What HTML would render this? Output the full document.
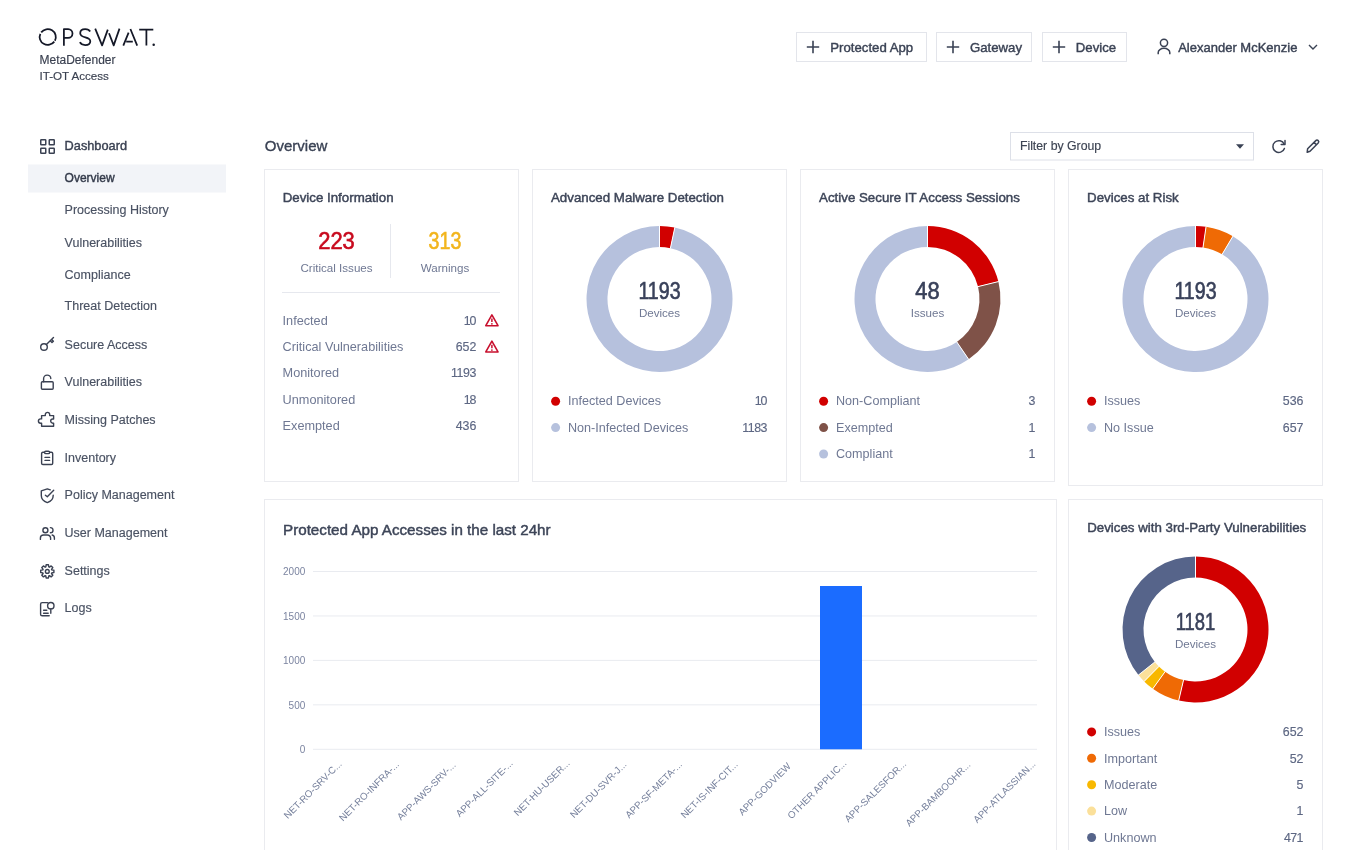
<!DOCTYPE html>
<html><head><meta charset="utf-8"><title>MetaDefender IT-OT Access - Overview</title>
<style>html,body{margin:0;padding:0;background:#fff;width:1360px;height:850px;overflow:hidden}svg{display:block;will-change:transform}text{font-family:"Liberation Sans",sans-serif}</style>
</head><body>
<svg width="1360" height="850" viewBox="0 0 1360 850">
<rect width="1360" height="850" fill="#fff"/>
<g fill="none" stroke="#141827" stroke-width="1.75" stroke-linejoin="round">
<path d="M41.20,32.36 A8.1,7.9 0 0 1 54.90,40.71"/>
<path d="M54.30,41.64 A8.1,7.9 0 0 1 40.35,33.79"/>
<path d="M63.9,45.8 V29.1 H68.1 A4.4,4.4 0 0 1 68.1,37.9 H63.9"/>
<path d="M90.2,31.5 C89.2,29.6 87.3,29.0 85.2,29.0 C82.1,29.0 80.2,30.7 80.2,33.2 C80.2,38.6 90.3,36.2 90.3,41.2 C90.3,43.9 88.2,45.0 85.2,45.0 C82.8,45.0 80.8,44.1 79.9,42.2"/>
<path d="M95.2,28.6 L102.1,45.4 L107.8,29.6 M109.0,33.2 L113.7,45.4 L119.5,28.6"/>
<path d="M123.3,45.6 L128.6,32.6 M130.4,29.0 L137.2,45.6 M126.2,41.6 H132.8"/>
<path d="M139.2,29.7 H153.3 M146.4,30 V45.6"/>
</g>
<circle cx="153.7" cy="44.7" r="1.25" fill="#141827"/>
<text x="39.5" y="64.3" font-size="12" fill="#3a4050" text-anchor="start" stroke="#3a4050" stroke-width="0.15" >MetaDefender</text>
<text x="39.5" y="80.2" font-size="11.6" fill="#3a4050" text-anchor="start" stroke="#3a4050" stroke-width="0.15" >IT-OT Access</text>
<rect x="796.5" y="32.5" width="130" height="29" fill="#fff" stroke="#e3e5eb" stroke-width="1"/>
<path d="M806.8,47 H819.2 M813,40.8 V53.2" stroke="#3a4254" stroke-width="1.6" fill="none"/>
<text x="830.3" y="51.7" font-size="13.2" fill="#3a4254" text-anchor="start" stroke="#3a4254" stroke-width="0.4" >Protected App</text>
<rect x="936.5" y="32.5" width="95" height="29" fill="#fff" stroke="#e3e5eb" stroke-width="1"/>
<path d="M946.8,47 H959.2 M953,40.8 V53.2" stroke="#3a4254" stroke-width="1.6" fill="none"/>
<text x="970" y="51.7" font-size="13.2" fill="#3a4254" text-anchor="start" stroke="#3a4254" stroke-width="0.4" >Gateway</text>
<rect x="1042.5" y="32.5" width="84" height="29" fill="#fff" stroke="#e3e5eb" stroke-width="1"/>
<path d="M1052.8,47 H1065.2 M1059,40.8 V53.2" stroke="#3a4254" stroke-width="1.6" fill="none"/>
<text x="1075.8" y="51.7" font-size="13.2" fill="#3a4254" text-anchor="start" stroke="#3a4254" stroke-width="0.4" >Device</text>
<g fill="none" stroke="#3a4254" stroke-width="1.5"><circle cx="1164" cy="42.8" r="3.6"/><path d="M1158.2,54.2 V52.5 A5.8,4.2 0 0 1 1169.8,52.5 V54.2"/></g>
<text x="1178.2" y="51.8" font-size="13" fill="#3a4254" text-anchor="start" stroke="#3a4254" stroke-width="0.4" >Alexander McKenzie</text>
<path d="M1309,45 L1313,49 L1317,45" stroke="#3a4254" stroke-width="1.4" fill="none"/>
<rect x="28" y="164.5" width="198" height="28" fill="#f2f4f8"/>
<g fill="none" stroke="#3a4152" stroke-width="1.5">
<rect x="40.75" y="139.75" width="5" height="5" rx="0.6"/>
<rect x="49.25" y="139.75" width="5" height="5" rx="0.6"/>
<rect x="40.75" y="148.25" width="5" height="5" rx="0.6"/>
<rect x="49.25" y="148.25" width="5" height="5" rx="0.6"/>
</g>
<text x="64.6" y="149.9" font-size="12.75" fill="#3a4152" text-anchor="start" stroke="#3a4152" stroke-width="0.4" >Dashboard</text>
<text x="64.6" y="181.6" font-size="12" fill="#333a4a" text-anchor="start" stroke="#333a4a" stroke-width="0.4" >Overview</text>
<text x="64.6" y="214.4" font-size="12.5" fill="#4a5263" text-anchor="start" stroke="#4a5263" stroke-width="0.15" >Processing History</text>
<text x="64.6" y="246.5" font-size="12.5" fill="#4a5263" text-anchor="start" stroke="#4a5263" stroke-width="0.15" >Vulnerabilities</text>
<text x="64.6" y="278.5" font-size="12.5" fill="#4a5263" text-anchor="start" stroke="#4a5263" stroke-width="0.15" >Compliance</text>
<text x="64.6" y="310.4" font-size="12.5" fill="#4a5263" text-anchor="start" stroke="#4a5263" stroke-width="0.15" >Threat Detection</text>
<text x="64.6" y="348.5" font-size="12.5" fill="#4a5263" text-anchor="start" stroke="#4a5263" stroke-width="0.15" >Secure Access</text>
<text x="64.6" y="386.3" font-size="12.5" fill="#4a5263" text-anchor="start" stroke="#4a5263" stroke-width="0.15" >Vulnerabilities</text>
<text x="64.6" y="423.9" font-size="12.5" fill="#4a5263" text-anchor="start" stroke="#4a5263" stroke-width="0.15" >Missing Patches</text>
<text x="64.6" y="461.8" font-size="12.5" fill="#4a5263" text-anchor="start" stroke="#4a5263" stroke-width="0.15" >Inventory</text>
<text x="64.6" y="499.1" font-size="12.5" fill="#4a5263" text-anchor="start" stroke="#4a5263" stroke-width="0.15" >Policy Management</text>
<text x="64.6" y="537.2" font-size="12.5" fill="#4a5263" text-anchor="start" stroke="#4a5263" stroke-width="0.15" >User Management</text>
<text x="64.6" y="574.7" font-size="12.5" fill="#4a5263" text-anchor="start" stroke="#4a5263" stroke-width="0.15" >Settings</text>
<text x="64.6" y="612.3" font-size="12.5" fill="#4a5263" text-anchor="start" stroke="#4a5263" stroke-width="0.15" >Logs</text>
<g fill="none" stroke="#3a4152" stroke-width="1.4" stroke-linecap="round" stroke-linejoin="round">
<circle cx="44" cy="347" r="3.3"/><path d="M46.4,344.6 L53.5,337.5 M50.2,340.8 L52.0,342.6 L53.4,341.2 L51.6,339.4"/>
<rect x="41.4" y="381.8" width="11.8" height="7.5" rx="1"/><path d="M43.6,381.8 V378.8 A3.6,3.6 0 0 1 50.8,378.6"/>
<path d="M41.6,426.3 V423.3 H40.6 A2.2,2.2 0 0 1 40.6,418.9 H41.6 V415.6 H45.3 V414.6 A2.2,2.2 0 0 1 49.7,414.6 V415.6 H53.6 V419 H52.8 A2.1,2.1 0 0 0 52.8,423.2 H53.6 V426.3 Z"/>
<rect x="41.6" y="452.3" width="11.1" height="12.2" rx="1.3"/><rect x="44.6" y="451.2" width="5" height="2.4" rx="1.2" fill="#fff"/><path d="M45,457.4 H49.6 M45,460.4 H49.6"/>
<path d="M50.3,489.9 L47.3,488.9 L41.3,490.8 V495.5 C41.3,499 44,501.5 47.3,502.6 C50.6,501.5 53.2,499 53.2,495.5 V495.2 M45.4,495.3 L47.3,496.8 L53.7,490.3"/>
<circle cx="45.4" cy="530.2" r="2.5"/><path d="M50.4,527.6 A2.6,2.6 0 0 1 50.4,532.8 M40.4,539.4 V538 A3.2,3 0 0 1 43.6,535 H47.4 A3.2,3 0 0 1 50.6,538 V539.4 M52.2,535 A2.5,3 0 0 1 54.4,538 V539.2"/>
<path d="M45.81,566.94 L46.14,564.80 L48.46,564.80 L48.79,566.94 L49.40,567.19 L51.14,565.91 L52.79,567.56 L51.51,569.30 L51.76,569.91 L53.90,570.24 L53.90,572.56 L51.76,572.89 L51.51,573.50 L52.79,575.24 L51.14,576.89 L49.40,575.61 L48.79,575.86 L48.46,578.00 L46.14,578.00 L45.81,575.86 L45.20,575.61 L43.46,576.89 L41.81,575.24 L43.09,573.50 L42.84,572.89 L40.70,572.56 L40.70,570.24 L42.84,569.91 L43.09,569.30 L41.81,567.56 L43.46,565.91 L45.20,567.19 Z"/><circle cx="47.3" cy="571.4" r="1.9"/>
<path d="M47.5,602.6 H42.2 A1.6,1.6 0 0 0 40.6,604.2 V614.2 A1.6,1.6 0 0 0 42.2,615.8 H49.2 M43.6,610.3 H46.8 M43.6,613.2 H48.2"/><circle cx="50.8" cy="605.7" r="3.2"/><path d="M50.8,609 V613.3"/>
</g>
<text x="264.8" y="150.9" font-size="15" fill="#3a4254" text-anchor="start" stroke="#3a4254" stroke-width="0.35" >Overview</text>
<rect x="1010.5" y="132.5" width="243" height="27.5" fill="#fff" stroke="#dde0e8" stroke-width="1"/>
<text x="1019.9" y="149.6" font-size="12.3" fill="#3d4453" text-anchor="start" stroke="#3d4453" stroke-width="0.15" >Filter by Group</text>
<path d="M1236,144.2 L1244,144.2 L1240,148.8 Z" fill="#3a4254"/>
<g fill="none" stroke="#3a4254" stroke-width="1.5" stroke-linecap="round" stroke-linejoin="round">
<path d="M1284.2,144.2 A5.9,5.9 0 1 0 1284.4,148.4"/><path d="M1285,140.6 V144.4 H1281.2"/>
<path d="M1307.2,152.2 L1307.6,148.8 L1315.8,140.6 A1.6,1.6 0 0 1 1318.2,143 L1310,151.2 Z M1314,142.4 L1316.4,144.8"/>
</g>
<rect x="264.5" y="169.5" width="254" height="312" fill="#fff" stroke="#eaebef" stroke-width="1"/>
<rect x="532.5" y="169.5" width="254" height="312" fill="#fff" stroke="#eaebef" stroke-width="1"/>
<rect x="800.5" y="169.5" width="254" height="312" fill="#fff" stroke="#eaebef" stroke-width="1"/>
<rect x="1068.5" y="169.5" width="254" height="316" fill="#fff" stroke="#eaebef" stroke-width="1"/>
<rect x="264.5" y="499.5" width="792" height="361" fill="#fff" stroke="#eaebef" stroke-width="1"/>
<rect x="1068.5" y="499.5" width="254" height="361" fill="#fff" stroke="#eaebef" stroke-width="1"/>
<text x="282.7" y="201.8" font-size="13.3" fill="#3d4558" text-anchor="start" stroke="#3d4558" stroke-width="0.45" >Device Information</text>
<text x="336.5" y="249.4" font-size="23" fill="#c80a1e" text-anchor="middle" stroke="#c80a1e" stroke-width="0.6" textLength="36.6" lengthAdjust="spacingAndGlyphs">223</text>
<text x="336.5" y="271.8" font-size="11.6" fill="#6f7893" text-anchor="middle" >Critical Issues</text>
<text x="445" y="249.4" font-size="23" fill="#f2b51d" text-anchor="middle" stroke="#f2b51d" stroke-width="0.6" textLength="32.8" lengthAdjust="spacingAndGlyphs">313</text>
<text x="445" y="271.8" font-size="11.6" fill="#6f7893" text-anchor="middle" >Warnings</text>
<line x1="390.5" y1="224" x2="390.5" y2="278" stroke="#e6e8ee" stroke-width="1"/>
<line x1="282" y1="292.5" x2="500" y2="292.5" stroke="#e6e8ee" stroke-width="1"/>
<text x="282.6" y="324.9" font-size="12.7" fill="#6f7893" text-anchor="start" >Infected</text>
<text x="476.4" y="324.9" font-size="12.4" fill="#5d6783" text-anchor="end" stroke="#5d6783" stroke-width="0.15" textLength="12.69" lengthAdjust="spacing">10</text>
<path d="M491.9,314.9 L498,325.7 H485.8 Z" fill="none" stroke="#c8102e" stroke-width="1.6" stroke-linejoin="round"/>
<path d="M491.9,318.5 V321.9" stroke="#c8102e" stroke-width="1.5"/><circle cx="491.9" cy="323.8" r="0.85" fill="#c8102e"/>
<text x="282.6" y="351.15" font-size="12.7" fill="#6f7893" text-anchor="start" >Critical Vulnerabilities</text>
<text x="476.4" y="351.15" font-size="12.4" fill="#5d6783" text-anchor="end" stroke="#5d6783" stroke-width="0.15" textLength="20.68" lengthAdjust="spacing">652</text>
<path d="M491.9,341.15 L498,351.95 H485.8 Z" fill="none" stroke="#c8102e" stroke-width="1.6" stroke-linejoin="round"/>
<path d="M491.9,344.75 V348.15" stroke="#c8102e" stroke-width="1.5"/><circle cx="491.9" cy="350.05" r="0.85" fill="#c8102e"/>
<text x="282.6" y="377.4" font-size="12.7" fill="#6f7893" text-anchor="start" >Monitored</text>
<text x="476.4" y="377.4" font-size="12.4" fill="#5d6783" text-anchor="end" stroke="#5d6783" stroke-width="0.15" textLength="25.37" lengthAdjust="spacing">1193</text>
<text x="282.6" y="403.65" font-size="12.7" fill="#6f7893" text-anchor="start" >Unmonitored</text>
<text x="476.4" y="403.65" font-size="12.4" fill="#5d6783" text-anchor="end" stroke="#5d6783" stroke-width="0.15" textLength="12.69" lengthAdjust="spacing">18</text>
<text x="282.6" y="429.9" font-size="12.7" fill="#6f7893" text-anchor="start" >Exempted</text>
<text x="476.4" y="429.9" font-size="12.4" fill="#5d6783" text-anchor="end" stroke="#5d6783" stroke-width="0.15" textLength="20.68" lengthAdjust="spacing">436</text>
<text x="551" y="201.8" font-size="13.3" fill="#3d4558" text-anchor="start" stroke="#3d4558" stroke-width="0.45" >Advanced Malware Detection</text>
<path d="M659.50,226.00 A73,73 0 0 1 674.80,227.62 L670.40,248.16 A52,52 0 0 0 659.50,247.00 Z" fill="#d10000"/>
<path d="M674.80,227.62 A73,73 0 1 1 659.50,226.00 L659.50,247.00 A52,52 0 1 0 670.40,248.16 Z" fill="#b6c1dd"/>
<line x1="659.50" y1="247.50" x2="659.50" y2="225.50" stroke="#fff" stroke-width="1"/>
<line x1="670.30" y1="248.64" x2="674.91" y2="227.13" stroke="#fff" stroke-width="1"/>
<text x="659.5" y="299.4" font-size="23" fill="#39415a" text-anchor="middle" stroke="#39415a" stroke-width="0.6" textLength="42.2" lengthAdjust="spacingAndGlyphs">1193</text>
<text x="659.5" y="317.2" font-size="11.6" fill="#6f7893" text-anchor="middle" >Devices</text>
<circle cx="555.6" cy="401.2" r="4.5" fill="#d10000"/>
<text x="568" y="405.4" font-size="12.6" fill="#6f7893" text-anchor="start" >Infected Devices</text>
<text x="767.5" y="405.4" font-size="12.4" fill="#5d6783" text-anchor="end" stroke="#5d6783" stroke-width="0.15" textLength="12.69" lengthAdjust="spacing">10</text>
<circle cx="555.6" cy="427.59999999999997" r="4.5" fill="#b6c1dd"/>
<text x="568" y="431.79999999999995" font-size="12.6" fill="#6f7893" text-anchor="start" >Non-Infected Devices</text>
<text x="767.5" y="431.79999999999995" font-size="12.4" fill="#5d6783" text-anchor="end" stroke="#5d6783" stroke-width="0.15" textLength="25.37" lengthAdjust="spacing">1183</text>
<text x="819.1" y="201.8" font-size="13.3" fill="#3d4558" text-anchor="start" stroke="#3d4558" stroke-width="0.45" >Active Secure IT Access Sessions</text>
<path d="M927.50,226.00 A73,73 0 0 1 998.39,281.59 L978.00,286.60 A52,52 0 0 0 927.50,247.00 Z" fill="#d10000"/>
<path d="M998.39,281.59 A73,73 0 0 1 968.64,359.31 L956.80,341.96 A52,52 0 0 0 978.00,286.60 Z" fill="#7f5248"/>
<path d="M968.64,359.31 A73,73 0 1 1 927.50,226.00 L927.50,247.00 A52,52 0 1 0 956.80,341.96 Z" fill="#b6c1dd"/>
<line x1="927.50" y1="247.50" x2="927.50" y2="225.50" stroke="#fff" stroke-width="1"/>
<line x1="977.51" y1="286.72" x2="998.88" y2="281.47" stroke="#fff" stroke-width="1"/>
<line x1="956.52" y1="341.54" x2="968.92" y2="359.72" stroke="#fff" stroke-width="1"/>
<text x="927.5" y="299.4" font-size="23" fill="#39415a" text-anchor="middle" stroke="#39415a" stroke-width="0.6" textLength="24.4" lengthAdjust="spacingAndGlyphs">48</text>
<text x="927.5" y="317.2" font-size="11.6" fill="#6f7893" text-anchor="middle" >Issues</text>
<circle cx="823.6" cy="401.2" r="4.5" fill="#d10000"/>
<text x="836" y="405.4" font-size="12.6" fill="#6f7893" text-anchor="start" >Non-Compliant</text>
<text x="1035.5" y="405.4" font-size="12.4" fill="#5d6783" text-anchor="end" stroke="#5d6783" stroke-width="0.15" textLength="6.89" lengthAdjust="spacing">3</text>
<circle cx="823.6" cy="427.59999999999997" r="4.5" fill="#7f5248"/>
<text x="836" y="431.79999999999995" font-size="12.6" fill="#6f7893" text-anchor="start" >Exempted</text>
<text x="1035.5" y="431.79999999999995" font-size="12.4" fill="#5d6783" text-anchor="end" stroke="#5d6783" stroke-width="0.15" textLength="5.79" lengthAdjust="spacing">1</text>
<circle cx="823.6" cy="454.0" r="4.5" fill="#b6c1dd"/>
<text x="836" y="458.2" font-size="12.6" fill="#6f7893" text-anchor="start" >Compliant</text>
<text x="1035.5" y="458.2" font-size="12.4" fill="#5d6783" text-anchor="end" stroke="#5d6783" stroke-width="0.15" textLength="5.79" lengthAdjust="spacing">1</text>
<text x="1087.1" y="201.8" font-size="13.3" fill="#3d4558" text-anchor="start" stroke="#3d4558" stroke-width="0.45" >Devices at Risk</text>
<path d="M1195.50,226.00 A73,73 0 0 1 1206.04,226.76 L1203.01,247.54 A52,52 0 0 0 1195.50,247.00 Z" fill="#d10000"/>
<path d="M1206.04,226.76 A73,73 0 0 1 1232.88,236.30 L1222.13,254.33 A52,52 0 0 0 1203.01,247.54 Z" fill="#ef6a05"/>
<path d="M1232.88,236.30 A73,73 0 1 1 1195.50,226.00 L1195.50,247.00 A52,52 0 1 0 1222.13,254.33 Z" fill="#b6c1dd"/>
<line x1="1195.50" y1="247.50" x2="1195.50" y2="225.50" stroke="#fff" stroke-width="1"/>
<line x1="1202.93" y1="248.04" x2="1206.11" y2="226.27" stroke="#fff" stroke-width="1"/>
<line x1="1221.87" y1="254.76" x2="1233.14" y2="235.87" stroke="#fff" stroke-width="1"/>
<text x="1195.5" y="299.4" font-size="23" fill="#39415a" text-anchor="middle" stroke="#39415a" stroke-width="0.6" textLength="42.2" lengthAdjust="spacingAndGlyphs">1193</text>
<text x="1195.5" y="317.2" font-size="11.6" fill="#6f7893" text-anchor="middle" >Devices</text>
<circle cx="1091.6" cy="401.2" r="4.5" fill="#d10000"/>
<text x="1104" y="405.4" font-size="12.6" fill="#6f7893" text-anchor="start" >Issues</text>
<text x="1303.5" y="405.4" font-size="12.4" fill="#5d6783" text-anchor="end" stroke="#5d6783" stroke-width="0.15" textLength="20.68" lengthAdjust="spacing">536</text>
<circle cx="1091.6" cy="427.59999999999997" r="4.5" fill="#b6c1dd"/>
<text x="1104" y="431.79999999999995" font-size="12.6" fill="#6f7893" text-anchor="start" >No Issue</text>
<text x="1303.5" y="431.79999999999995" font-size="12.4" fill="#5d6783" text-anchor="end" stroke="#5d6783" stroke-width="0.15" textLength="20.68" lengthAdjust="spacing">657</text>
<text x="1087.2" y="531.8" font-size="13.3" fill="#3d4558" text-anchor="start" stroke="#3d4558" stroke-width="0.45" >Devices with 3rd-Party Vulnerabilities</text>
<path d="M1195.50,556.50 A73,73 0 1 1 1178.71,700.54 L1183.54,680.11 A52,52 0 1 0 1195.50,577.50 Z" fill="#d10000"/>
<path d="M1178.71,700.54 A73,73 0 0 1 1152.80,688.71 L1165.08,671.68 A52,52 0 0 0 1183.54,680.11 Z" fill="#ef6a05"/>
<path d="M1152.80,688.71 A73,73 0 0 1 1144.15,681.39 L1158.92,666.46 A52,52 0 0 0 1165.08,671.68 Z" fill="#f8b800"/>
<path d="M1144.15,681.39 A73,73 0 0 1 1138.45,675.04 L1154.86,661.94 A52,52 0 0 0 1158.92,666.46 Z" fill="#fbe09a"/>
<path d="M1138.45,675.04 A73,73 0 0 1 1195.50,556.50 L1195.50,577.50 A52,52 0 0 0 1154.86,661.94 Z" fill="#56648a"/>
<line x1="1195.50" y1="578.00" x2="1195.50" y2="556.00" stroke="#fff" stroke-width="1"/>
<line x1="1183.65" y1="679.62" x2="1178.59" y2="701.03" stroke="#fff" stroke-width="1"/>
<line x1="1165.37" y1="671.27" x2="1152.51" y2="689.11" stroke="#fff" stroke-width="1"/>
<line x1="1159.28" y1="666.11" x2="1143.80" y2="681.74" stroke="#fff" stroke-width="1"/>
<line x1="1155.25" y1="661.63" x2="1138.06" y2="675.36" stroke="#fff" stroke-width="1"/>
<text x="1195.5" y="629.8" font-size="23" fill="#39415a" text-anchor="middle" stroke="#39415a" stroke-width="0.6" textLength="39.6" lengthAdjust="spacingAndGlyphs">1181</text>
<text x="1195.5" y="647.5" font-size="11.6" fill="#6f7893" text-anchor="middle" >Devices</text>
<circle cx="1091.6" cy="731.9" r="4.5" fill="#d10000"/>
<text x="1104" y="736.1" font-size="12.6" fill="#6f7893" text-anchor="start" >Issues</text>
<text x="1303.5" y="736.1" font-size="12.4" fill="#5d6783" text-anchor="end" stroke="#5d6783" stroke-width="0.15" textLength="20.68" lengthAdjust="spacing">652</text>
<circle cx="1091.6" cy="758.3" r="4.5" fill="#ef6a05"/>
<text x="1104" y="762.5" font-size="12.6" fill="#6f7893" text-anchor="start" >Important</text>
<text x="1303.5" y="762.5" font-size="12.4" fill="#5d6783" text-anchor="end" stroke="#5d6783" stroke-width="0.15" textLength="13.79" lengthAdjust="spacing">52</text>
<circle cx="1091.6" cy="784.6999999999999" r="4.5" fill="#f8b800"/>
<text x="1104" y="788.9" font-size="12.6" fill="#6f7893" text-anchor="start" >Moderate</text>
<text x="1303.5" y="788.9" font-size="12.4" fill="#5d6783" text-anchor="end" stroke="#5d6783" stroke-width="0.15" textLength="6.89" lengthAdjust="spacing">5</text>
<circle cx="1091.6" cy="811.0999999999999" r="4.5" fill="#fbe09a"/>
<text x="1104" y="815.3" font-size="12.6" fill="#6f7893" text-anchor="start" >Low</text>
<text x="1303.5" y="815.3" font-size="12.4" fill="#5d6783" text-anchor="end" stroke="#5d6783" stroke-width="0.15" textLength="5.79" lengthAdjust="spacing">1</text>
<circle cx="1091.6" cy="837.5" r="4.5" fill="#56648a"/>
<text x="1104" y="841.7" font-size="12.6" fill="#6f7893" text-anchor="start" >Unknown</text>
<text x="1303.5" y="841.7" font-size="12.4" fill="#5d6783" text-anchor="end" stroke="#5d6783" stroke-width="0.15" textLength="19.58" lengthAdjust="spacing">471</text>
<text x="283" y="534.7" font-size="15.2" fill="#3d4558" text-anchor="start" stroke="#3d4558" stroke-width="0.45" >Protected App Accesses in the last 24hr</text>
<line x1="313" y1="571.50" x2="1037" y2="571.50" stroke="#e9ebf0" stroke-width="1"/>
<text x="305.3" y="575.2" font-size="10" fill="#7b84a0" text-anchor="end" >2000</text>
<line x1="313" y1="615.95" x2="1037" y2="615.95" stroke="#e9ebf0" stroke-width="1"/>
<text x="305.3" y="619.6500000000001" font-size="10" fill="#7b84a0" text-anchor="end" >1500</text>
<line x1="313" y1="660.40" x2="1037" y2="660.40" stroke="#e9ebf0" stroke-width="1"/>
<text x="305.3" y="664.1" font-size="10" fill="#7b84a0" text-anchor="end" >1000</text>
<line x1="313" y1="704.85" x2="1037" y2="704.85" stroke="#e9ebf0" stroke-width="1"/>
<text x="305.3" y="708.5500000000001" font-size="10" fill="#7b84a0" text-anchor="end" >500</text>
<line x1="313" y1="749.30" x2="1037" y2="749.30" stroke="#e9ebf0" stroke-width="1"/>
<text x="305.3" y="753.0" font-size="10" fill="#7b84a0" text-anchor="end" >0</text>
<rect x="820" y="586" width="42" height="163.3" fill="#1b6cff"/>
<text transform="translate(342.50,764.60) rotate(-45)" font-size="9.7" fill="#76809c" text-anchor="end">NET-RO-SRV-C...</text>
<text transform="translate(399.70,765.10) rotate(-45)" font-size="9.7" fill="#76809c" text-anchor="end">NET-RO-INFRA-...</text>
<text transform="translate(456.30,765.60) rotate(-45)" font-size="9.7" fill="#76809c" text-anchor="end">APP-AWS-SRV-...</text>
<text transform="translate(513.50,763.90) rotate(-45)" font-size="9.7" fill="#76809c" text-anchor="end">APP-ALL-SITE-...</text>
<text transform="translate(570.30,763.90) rotate(-45)" font-size="9.7" fill="#76809c" text-anchor="end">NET-HU-USER...</text>
<text transform="translate(627.20,765.20) rotate(-45)" font-size="9.7" fill="#76809c" text-anchor="end">NET-DU-SVR-J...</text>
<text transform="translate(682.70,765.20) rotate(-45)" font-size="9.7" fill="#76809c" text-anchor="end">APP-SF-META-...</text>
<text transform="translate(738.30,765.20) rotate(-45)" font-size="9.7" fill="#76809c" text-anchor="end">NET-IS-INF-CIT...</text>
<text transform="translate(791.50,766.80) rotate(-45)" font-size="9.7" fill="#76809c" text-anchor="end">APP-GODVIEW</text>
<text transform="translate(847.10,763.90) rotate(-45)" font-size="9.7" fill="#76809c" text-anchor="end">OTHER APPLIC...</text>
<text transform="translate(906.80,764.50) rotate(-45)" font-size="9.7" fill="#76809c" text-anchor="end">APP-SALESFOR...</text>
<text transform="translate(971.10,765.40) rotate(-45)" font-size="9.7" fill="#76809c" text-anchor="end">APP-BAMBOOHR...</text>
<text transform="translate(1036.20,764.50) rotate(-45)" font-size="9.7" fill="#76809c" text-anchor="end">APP-ATLASSIAN...</text>
</svg>
</body></html>
